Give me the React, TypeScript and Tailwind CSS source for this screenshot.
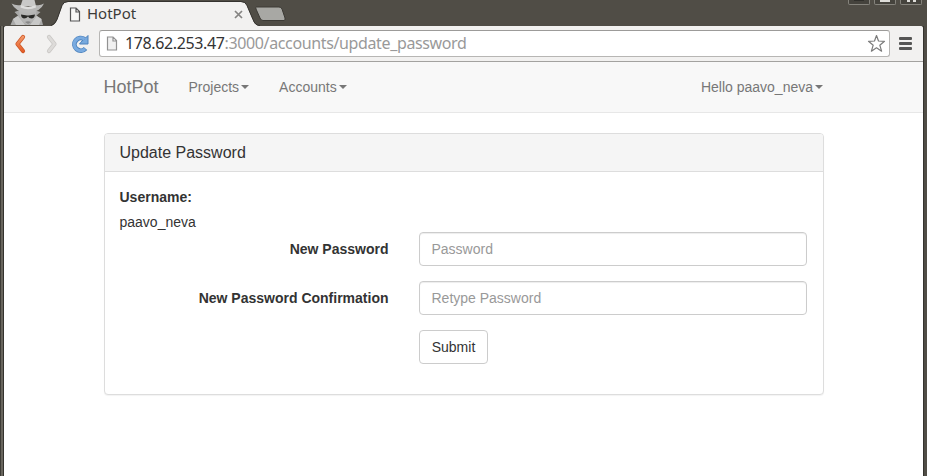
import React from 'react';

const ubuntu = "font-['Noto_Sans','Open_Sans',sans-serif]";

function Incognito() {
  return (
    <svg width="36" height="25" viewBox="0 0 36 25" className="ml-[5px] shrink-0">
      <path d="M1.500 25 4 19 9 15.500 5.500 12 11 10h14l6.500 2-4 3.500L32.500 19 34 25Z" fill="#a9a9a8" />
      <path d="M10 11 11 18 14 22 18.500 25 22.500 22 26 18 27.500 11Z" fill="#b5b5b4" />
      <path d="m4 19 5-3L16 25H7ZM32.500 19l-5-3L21 25h9Z" fill="#c8c8c7" />
      <path d="M11.500 6 13.500 0H25.500L27 6Z" fill="#c9c9c8" />
      <path d="M2.500 3.500Q7 6 12 5 19 9 26.500 5 31 6 35 3.500 31 12.500 19 13 7 12.500 2.500 3.500Z" fill="#b8b8b7" />
      <path d="M12 5Q19 8.500 26.500 5L27 7.500Q19 11 11.500 7.500Z" fill="#dededd" />
      <path d="M12 14.500 18 15.500h1.500L26 14.500Q25.500 18.500 22.500 18.500 20 18.500 19 16.500 17.500 18.500 15 18.500 12 18 12 14.500Z" fill="#292927" />
      <path d="M16 22Q19 20.500 22 22L19 24Z" fill="#888" />
    </svg>
  );
}

function PageIcon({ dark = false }: { dark?: boolean }) {
  return (
    <svg width="12" height="15" viewBox="0 0 12 15" className="shrink-0">
      <path d="M1.500 1H7l3.500 3.500V14h-9ZM7 1v4h3.500" fill={dark ? '#f7f7f6' : '#f1f1f1'} stroke={dark ? '#555' : '#929292'} strokeWidth="1.200" />
    </svg>
  );
}

function Chevron({ forward = false }: { forward?: boolean }) {
  const points = forward ? '3 3 8.500 10 3 17' : '9 3 3.500 10 9 17';
  return (
    <svg width="12" height="20" viewBox="0 0 12 20" className="shrink-0">
      <defs>
        <linearGradient id="orange" x1="0" y1="0" x2="0" y2="20" gradientUnits="userSpaceOnUse">
          <stop stopColor="#f6a273" />
          <stop offset="1" stopColor="#e2531e" />
        </linearGradient>
      </defs>
      <polyline points={points} fill="none" stroke={forward ? '#c9c7c4' : '#cb5524'} strokeWidth="4.200" strokeLinecap="round" strokeLinejoin="round" />
      <polyline points={points} fill="none" stroke={forward ? '#dddbd9' : 'url(#orange)'} strokeWidth="2.800" strokeLinecap="round" strokeLinejoin="round" />
    </svg>
  );
}

function TabStrip() {
  return (
    <div className="flex h-[26px] items-start bg-[#504d46] pl-1">
      <Incognito />
      <div className="relative ml-[6px] h-[26px] w-[209px] shrink-0">
        <svg width="209" height="26" className="absolute inset-0">
          <path d="M0 26Q4 25 6 20L11 6Q12.500 2 17 2H190Q194.500 2 196 6L202 20Q204 26 209 26Z" fill="#f2f1f0" />
          <path d="M0 25.500Q4 24.500 6 19.500L11 5.500Q12.500 1.500 17 1.500H190Q194.500 1.500 196 5.500L202 19.500Q204 25.500 209 25.500" fill="none" stroke="#35332f" />
        </svg>
        <div className="relative flex h-[26px] items-center pl-[18px] pr-[17px] pt-[2px]">
          <PageIcon dark />
          <span className={`${ubuntu} ml-[6px] pb-[2px] text-[15px] leading-5 text-[#3c3b38]`}>HotPot</span>
          <svg width="9" height="9" viewBox="0 0 9 9" className="ml-auto">
            <path d="m1 1 7 7M8 1 1 8" stroke="#858482" strokeWidth="1.700" />
          </svg>
        </div>
      </div>
      <svg width="33" height="16" viewBox="0 0 33 16" className="-ml-[6px] mt-[6px] shrink-0">
        <path d="M2.500 1H25Q27 1 28 3L31 12Q31.500 14.500 30 14.500H9Q7 14.500 6 12L2 3Q1.500 1 2.500 1Z" fill="#a8a8a4" stroke="#3c3a35" />
      </svg>
      <div className="ml-auto flex gap-[4px] pr-[5px]">
        {['min', 'max', 'close'].map((name) => (
          <div key={name} className="flex h-[5px] w-[22px] justify-center rounded-b-[2px] border border-t-0 border-[#85837c] bg-[#45433d]">
            {name === 'min' && <span className="h-px w-[10px] bg-[#302f2b]" />}
            {name === 'max' && <span className="h-[2px] w-[10px] bg-[#deddd9]" />}
            {name === 'close' && <span className="h-[2px] w-[9px] border-x-[3px] border-[#deddd9]" />}
          </div>
        ))}
      </div>
    </div>
  );
}

function Toolbar() {
  return (
    <div className="flex h-9 items-center rounded-t-[3px] border-b border-[#a3a2a0] bg-[#f2f1f0] pl-[10px] pr-[11px]">
      <Chevron />
      <span className="w-[20px]" />
      <Chevron forward />
      <svg width="20" height="20" viewBox="0 0 20 20" className="ml-[12px] shrink-0">
        <path d="M14.500 5.300A6.300 6.300 0 1 0 15.500 14.500" fill="none" stroke="#4e83bd" strokeWidth="4.800" />
        <path d="M18 1.500V10H9.500l2.500-3 3-2.500Z" fill="#78aade" stroke="#4e83bd" strokeLinejoin="round" />
        <path d="M14.500 5.300A6.300 6.300 0 1 0 15 14.800" fill="none" stroke="#7aabe0" strokeWidth="3.200" />
      </svg>
      <div className="ml-[9px] flex h-[27px] w-[791px] shrink-0 items-center rounded-[3px] border border-[#b7b6b4] border-t-[#9c9b99] bg-white pl-[6px] pr-[3px]">
        <PageIcon />
        <span className={`${ubuntu} ml-[7px] whitespace-nowrap pb-px text-[16px] leading-5 tracking-[-0.37px] text-[#999]`}>
          <span className="text-[#333]">178.62.253.47</span>:3000/accounts/update_password
        </span>
        <svg width="19" height="19" viewBox="0 0 19 19" className="ml-auto">
          <path d="m9.500 1.500 2 5.500 6 .3-4.700 3.900 1.800 6-5.100-3.400-5.100 3.400 1.800-6L1.500 7.300l6-.3Z" fill="#fff" stroke="#7b7b7b" strokeWidth="1.200" strokeLinejoin="round" />
        </svg>
      </div>
      <div className="ml-auto flex w-[13px] flex-col gap-[2px]">
        <i className="h-[3px] rounded-[1px] bg-[#555]" />
        <i className="h-[3px] rounded-[1px] bg-[#555]" />
        <i className="h-[3px] rounded-[1px] bg-[#555]" />
      </div>
    </div>
  );
}

function MenuItem({ children }: { children: React.ReactNode }) {
  return (
    <a className="flex items-center gap-[2px]">
      {children}
      <i className="border-x-4 border-t-4 border-x-transparent border-t-[#777]" />
    </a>
  );
}

function Field({ label, placeholder }: { label: string; placeholder: string }) {
  return (
    <div className="mb-[15px] flex h-[34px] items-center">
      <label className="w-[269px] text-right font-bold">{label}</label>
      <input
        type="password"
        placeholder={placeholder}
        className="ml-[30.5px] h-[34px] w-[388px] rounded-[4px] border border-[#ccc] px-[11.500px] shadow-[inset_0_1px_1px_rgba(0,0,0,0.075)] placeholder:text-[#999]"
      />
    </div>
  );
}

export default function App() {
  return (
    <div className="flex h-[476px] w-[927px] flex-col overflow-hidden bg-[#504d46] font-['Liberation_Sans',Arial,sans-serif] text-[14px] leading-5 text-[#333]">
      <TabStrip />
      <div className="flex min-h-0 flex-1">
        <div className="w-1 shrink-0 border-x border-l-[#3e3c37] border-r-[#35332e] bg-[#68655d]" />
        <main className="flex w-[919px] flex-col rounded-t-[3px] bg-white">
          <Toolbar />
          <nav className="flex h-[51px] items-center border-b border-[#e7e7e7] bg-[#f8f8f8] pl-[99.5px] pr-[100px] text-[#777]">
            <a className="text-[18px]">HotPot</a>
            <div className="ml-[30px] flex gap-[30px]">
              <MenuItem>Projects</MenuItem>
              <MenuItem>Accounts</MenuItem>
            </div>
            <div className="ml-auto"><MenuItem>Hello paavo_neva</MenuItem></div>
          </nav>
          <section className="ml-[100px] mt-5 h-[262px] w-[720px] overflow-hidden rounded-[4px] border border-[#ddd] bg-white shadow-[0_1px_1px_rgba(0,0,0,0.05)]">
            <h3 className="flex h-[38px] items-center border-b border-[#ddd] bg-[#f5f5f5] px-[14.500px] text-[16px]">Update Password</h3>
            <div className="px-[14.500px] pt-[15px]">
              <div className="font-bold">Username:</div>
              <div className="mt-[5px]">paavo_neva</div>
              <Field label="New Password" placeholder="Password" />
              <Field label="New Password Confirmation" placeholder="Retype Password" />
              <button className="ml-[299.5px] h-[34px] w-[69px] rounded-[4px] border border-[#ccc] bg-white">Submit</button>
            </div>
          </section>
        </main>
        <div className="w-1 shrink-0 border-l border-[#35332e] bg-[#504d46]" />
      </div>
    </div>
  );
}
